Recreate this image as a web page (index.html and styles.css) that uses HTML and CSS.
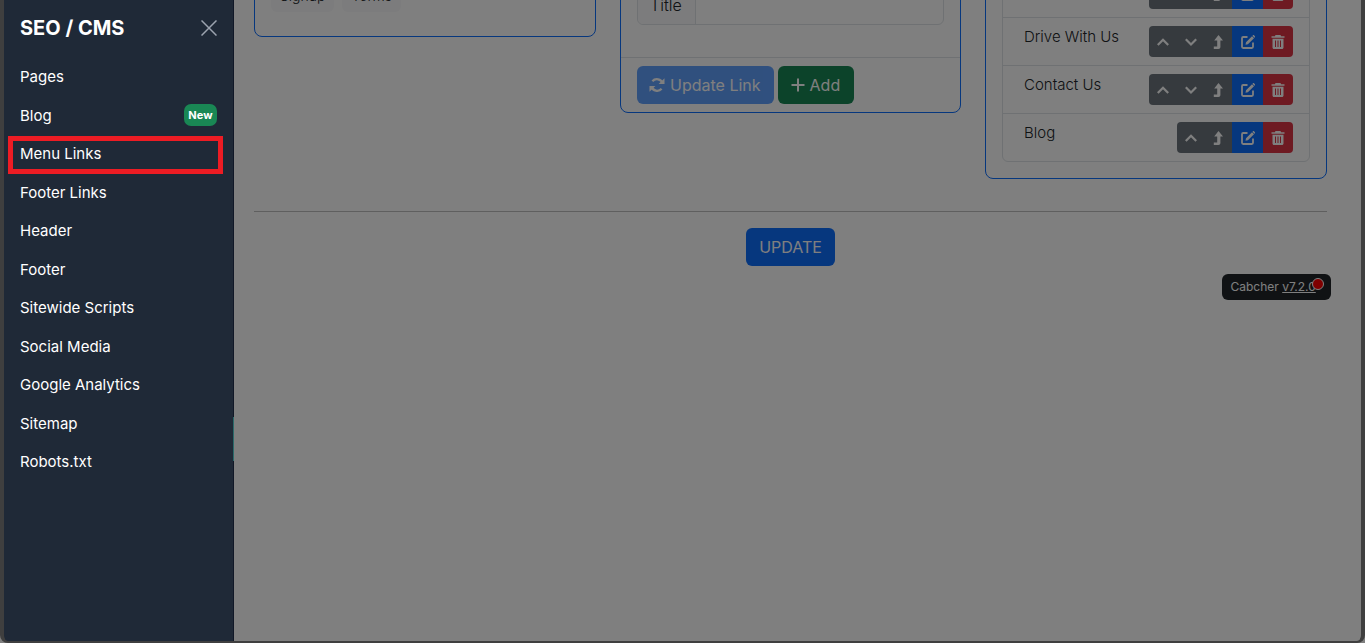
FILE: index.html
```html
<!DOCTYPE html>
<html lang="en">
<head>
  <meta charset="UTF-8" />
  <meta name="viewport" content="width=device-width, initial-scale=1.0" />
  <title>SEO / CMS - Menu Links</title>
  <link rel="stylesheet" href="styles.css">
</head>
<body>
  <svg class="sprites" width="0" height="0" aria-hidden="true">
    <symbol id="i-up" viewBox="0 0 16 16"><path d="M2.800 11l5.200-5.200 5.200 5.200" fill="none" stroke="currentColor" stroke-width="2.200"/></symbol>
    <symbol id="i-down" viewBox="0 0 16 16"><path d="M2.800 5.300l5.200 5.200 5.200-5.200" fill="none" stroke="currentColor" stroke-width="2.200"/></symbol>
    <symbol id="i-top" viewBox="0 0 16 16"><path d="M8.500 1L13 6.500h-2.600V13c0 1.200-.8 2-2 2H3.800v-2.600h3.400V6.500H4.200z" fill="currentColor"/></symbol>
    <symbol id="i-edit" viewBox="0 0 16 16"><path d="M7.500 3H3.200C2.500 3 2 3.500 2 4.200v8.600c0 .7.5 1.200 1.200 1.200h8.600c.7 0 1.200-.5 1.200-1.200V8.500" fill="none" stroke="currentColor" stroke-width="1.800"/><path d="M6 8.300L12 2.200l2 2-6.100 6.100-2.400.4zM12.800 1.400c.4-.4 1-.4 1.400 0l.6.6c.4.4.4 1 0 1.400l-.4.4-2-2z" fill="currentColor"/></symbol>
    <symbol id="i-trash" viewBox="0 0 16 16"><path d="M5.500 1h5l.6 1.200H14.500v1.600h-13V2.200h3.400z" fill="currentColor"/><path fill-rule="evenodd" d="M2.500 4.800h11v8.700c0 .9-.7 1.500-1.500 1.500H4c-.8 0-1.500-.6-1.500-1.500zM5 6.500v6.500h1V6.500zm2.500 0v6.500h1V6.500zm2.500 0v6.500h1V6.500z" fill="currentColor"/></symbol>
  </svg>

  <div class="page">
    <div class="spacer-left"></div>
    <main class="content">
      <div class="cards">
        <section class="card card-tags">
          <div class="tags">
            <span class="tag">Signup</span>
            <span class="tag">Terms</span>
          </div>
        </section>

        <section class="card card-form">
          <div class="card-body">
            <div class="field">
              <span class="field-label">Title</span>
              <span class="field-input"></span>
            </div>
          </div>
          <div class="card-footer">
            <button class="btn btn-primary btn-faded" type="button">
              <svg class="refresh" viewBox="0 0 16 16" width="16" height="16"><path d="M13.600 6.300A6 6 0 0 0 3.400 4.200M2.400 9.700a6 6 0 0 0 10.200 2.100" fill="none" stroke="currentColor" stroke-width="2.300"/><path d="M15.500 1.200v5.900H9.600zM.5 14.800V8.900h5.900z" fill="currentColor"/></svg>
              Update Link
            </button>
            <button class="btn btn-success" type="button">
              <svg viewBox="0 0 16 16" width="16" height="16"><path d="M8 1.500v13M1.500 8h13" stroke="currentColor" stroke-width="2" fill="none"/></svg>
              Add
            </button>
          </div>
        </section>

        <section class="card card-list">
          <ul class="link-list">
            <li class="link-row">
              <span class="link-name">About Us</span>
              <div class="actions">
                <button class="act act-dark" type="button"><svg><use href="#i-up"/></svg></button>
                <button class="act act-dark" type="button"><svg><use href="#i-down"/></svg></button>
                <button class="act act-dark" type="button"><svg><use href="#i-top"/></svg></button>
                <button class="act act-blue" type="button"><svg><use href="#i-edit"/></svg></button>
                <button class="act act-red" type="button"><svg><use href="#i-trash"/></svg></button>
              </div>
            </li>
            <li class="link-row">
              <span class="link-name">Drive With Us</span>
              <div class="actions">
                <button class="act act-dark" type="button"><svg><use href="#i-up"/></svg></button>
                <button class="act act-dark" type="button"><svg><use href="#i-down"/></svg></button>
                <button class="act act-dark" type="button"><svg><use href="#i-top"/></svg></button>
                <button class="act act-blue" type="button"><svg><use href="#i-edit"/></svg></button>
                <button class="act act-red" type="button"><svg><use href="#i-trash"/></svg></button>
              </div>
            </li>
            <li class="link-row">
              <span class="link-name">Contact Us</span>
              <div class="actions">
                <button class="act act-dark" type="button"><svg><use href="#i-up"/></svg></button>
                <button class="act act-dark" type="button"><svg><use href="#i-down"/></svg></button>
                <button class="act act-dark" type="button"><svg><use href="#i-top"/></svg></button>
                <button class="act act-blue" type="button"><svg><use href="#i-edit"/></svg></button>
                <button class="act act-red" type="button"><svg><use href="#i-trash"/></svg></button>
              </div>
            </li>
            <li class="link-row">
              <span class="link-name">Blog</span>
              <div class="actions">
                <button class="act act-dark" type="button"><svg><use href="#i-up"/></svg></button>
                <button class="act act-dark" type="button"><svg><use href="#i-top"/></svg></button>
                <button class="act act-blue" type="button"><svg><use href="#i-edit"/></svg></button>
                <button class="act act-red" type="button"><svg><use href="#i-trash"/></svg></button>
              </div>
            </li>
          </ul>
        </section>
      </div>

      <hr class="divider" />
      <div class="save-row">
        <button class="btn btn-primary btn-update" type="button">UPDATE</button>
      </div>
    </main>
  </div>

  <div class="version">Cabcher <a href="#">v7.2.0</a><span class="dot"></span></div>

  <div class="backdrop"></div>

  <aside class="sidebar">
    <div class="sidebar-head">
      <h2>SEO / CMS</h2>
      <button class="close" type="button" aria-label="Close">
        <svg viewBox="0 0 16 16" width="16" height="16"><path d="M.5.500l15 15M15.500.500l-15 15" stroke="currentColor" stroke-width="1.500" fill="none"/></svg>
      </button>
    </div>
    <nav class="side-nav">
      <a href="#">Pages</a>
      <a href="#">Blog <span class="badge-new">New</span></a>
      <a href="#" class="marked">Menu Links</a>
      <a href="#">Footer Links</a>
      <a href="#">Header</a>
      <a href="#">Footer</a>
      <a href="#">Sitewide Scripts</a>
      <a href="#">Social Media</a>
      <a href="#">Google Analytics</a>
      <a href="#">Sitemap</a>
      <a href="#">Robots.txt</a>
    </nav>
    <span class="grip"></span>
  </aside>

  <div class="frame"></div>
</body>
</html>
```

FILE: styles.css
```css
html, body {
  height: 100%;
}
body {
  margin: 0;
  overflow: hidden;
  background-color: #fff;
  color: #212529;
  font-family: Inter, 'Noto Sans', sans-serif;
  font-size: 15px;
}
.sprites {
  display: none;
}

/* page behind the drawer, scrolled down a bit */
.page {
  display: flex;
}
.spacer-left {
  width: 234px;
  flex-shrink: 0;
}
.content {
  width: 1073px;
  margin: -101px 0 0 20px;
}
.cards {
  display: flex;
  align-items: flex-start;
  gap: 24px;
}
.card {
  width: 342px;
  box-sizing: border-box;
  border: 1px solid #0d6efd;
  border-radius: 8px;
}
.card-tags {
  height: 138px;
  padding: 79px 16px 0;
}
.tags {
  display: flex;
  gap: 8px;
}
.tag {
  padding: 6px 9px;
  height: 21px;
  line-height: 21px;
  font-size: 14px;
  font-weight: 350;
  background-color: #f9f9fa;
  border-radius: 6px;
}
.card-form {
  width: 341px;
}
.card-body {
  padding: 85px 16px 32px;
}
.field {
  display: flex;
  height: 40px;
  box-sizing: border-box;
  border: 1px solid #dee2e6;
  border-radius: 6px;
}
.field-label {
  padding: 0 12px;
  width: 58px;
  box-sizing: border-box;
  line-height: 39px;
  font-size: 16px;
  font-weight: 350;
  background-color: #f8f9fa;
  border-right: 1px solid #dee2e6;
  border-radius: 6px 0 0 6px;
}
.card-footer {
  display: flex;
  gap: 4px;
  padding: 8px 16px;
  border-top: 1px solid #dee2e6;
}
.btn {
  display: inline-flex;
  align-items: center;
  gap: 5px;
  height: 38px;
  padding: 0 13px 0 12px;
  border: 0;
  border-radius: 6px;
  color: #fff;
  font-family: inherit;
  font-size: 16px;
}
.btn-primary {
  background-color: #0d6efd;
}
.btn-faded {
  opacity: 0.65;
}
.btn-success {
  gap: 4px;
  padding-right: 14px;
  background-color: #198754;
}
.card-list {
  padding: 0 16px 16px;
}
.link-list {
  list-style: none;
  margin: 0;
  padding: 0;
  border: 1px solid #dee2e6;
  border-radius: 6px;
}
.link-row {
  display: flex;
  justify-content: space-between;
  height: 48px;
  box-sizing: border-box;
  padding: 8px 16px 8px 21px;
  border-top: 1px solid #dee2e6;
}
.link-row:first-child {
  margin-top: 68px;
}
.link-name {
  font-size: 15px;
  font-weight: 350;
  line-height: 21px;
}
.actions {
  display: flex;
  height: 31px;
  border-radius: 4px;
  overflow: hidden;
}
.act {
  width: 27.6px;
  height: 31px;
  padding: 0;
  border: 0;
  display: flex;
  align-items: center;
  justify-content: center;
  color: #fff;
}
.act svg {
  width: 16px;
  height: 16px;
}
.act-dark {
  background-color: #6c757d;
}
.act-blue {
  width: 31px;
  background-color: #0d6efd;
}
.act-red {
  width: 30px;
  background-color: #dc3545;
}
.divider {
  margin: 32px 0 16px;
  border: 0;
  border-top: 1px solid #bfbfbf;
}
.save-row {
  display: flex;
  justify-content: center;
}
.btn-update {
  width: 89px;
  justify-content: center;
  padding: 0;
}

.version {
  position: fixed;
  left: 1222px;
  top: 274px;
  width: 109px;
  height: 26px;
  box-sizing: border-box;
  padding-left: 8.5px;
  background-color: #212529;
  border-radius: 6px;
  color: #fff;
  font-size: 12px;
  line-height: 26px;
}
.version a {
  color: #fff;
}
.dot {
  position: absolute;
  top: 4px;
  left: 90px;
  width: 10px;
  height: 10px;
  background-color: #f00;
  border: 1px solid #fff;
  border-radius: 50%;
}

.backdrop {
  position: fixed;
  inset: 0;
  background-color: rgba(0, 0, 0, 0.5);
}

/* drawer */
.sidebar {
  position: fixed;
  left: 4px;
  top: 0;
  bottom: 2px;
  width: 230px;
  box-sizing: border-box;
  padding: 0 16px;
  background-color: #1f2937;
  border-right: 1px solid #111827;
  color: #fff;
}
.sidebar-head {
  display: flex;
  align-items: center;
  justify-content: space-between;
  height: 55px;
}
.sidebar-head h2 {
  margin: 0;
  font-size: 20px;
  font-weight: 700;
  line-height: 24px;
}
.close {
  padding: 0;
  border: 0;
  background: none;
  color: #9ca3af;
  display: flex;
}
.side-nav {
  display: flex;
  flex-direction: column;
  padding-top: 2.3px;
}
.side-nav a {
  display: flex;
  align-items: center;
  justify-content: space-between;
  height: 38.5px;
  color: #fff;
  text-decoration: none;
  font-size: 15px;
}
.badge-new {
  padding: 0 4.5px;
  height: 22px;
  line-height: 22px;
  font-size: 11px;
  font-weight: 700;
  background-color: #198754;
  border-radius: 7px;
}
.marked {
  position: relative;
}
.marked::after {
  content: "";
  position: absolute;
  left: -12px;
  right: -6px;
  top: 2px;
  bottom: -1px;
  border: 5px solid #ed1c24;
}
.grip {
  position: absolute;
  right: -1px;
  top: 417px;
  width: 1px;
  height: 44px;
  background-color: #2a6a6a;
}

/* dark window edge round the shot */
.frame {
  position: fixed;
  inset: 0;
  border: solid #3f3f3f;
  border-width: 0 4px 2px;
  border-radius: 0 0 8px 8px;
  pointer-events: none;
}
```
